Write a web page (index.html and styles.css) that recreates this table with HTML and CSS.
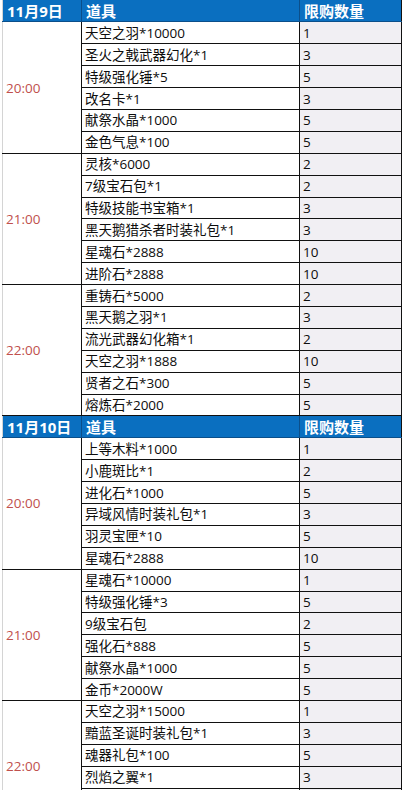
FILE: index.html
```html
<!DOCTYPE html>
<html lang="zh-CN">
<head>
<meta charset="utf-8">
<link rel="stylesheet" href="styles.css">
</head>
<body>
<div class="sheet">
<table class="grid">
<colgroup><col class="c-time"><col class="c-item"><col class="c-qty"></colgroup>
<tbody>
<tr class="head"><td class="h-date">11月9日</td><td class="h-item">道具</td><td class="h-qty">限购数量</td></tr>
<tr><td class="time" rowspan="6">20:00</td><td class="item">天空之羽*10000</td><td class="qty">1</td></tr>
<tr><td class="item">圣火之戟武器幻化*1</td><td class="qty">3</td></tr>
<tr><td class="item">特级强化锤*5</td><td class="qty">5</td></tr>
<tr><td class="item">改名卡*1</td><td class="qty">3</td></tr>
<tr><td class="item">献祭水晶*1000</td><td class="qty">5</td></tr>
<tr><td class="item">金色气息*100</td><td class="qty">5</td></tr>
<tr><td class="time" rowspan="6">21:00</td><td class="item">灵核*6000</td><td class="qty">2</td></tr>
<tr><td class="item">7级宝石包*1</td><td class="qty">2</td></tr>
<tr><td class="item">特级技能书宝箱*1</td><td class="qty">3</td></tr>
<tr><td class="item">黑天鹅猎杀者时装礼包*1</td><td class="qty">3</td></tr>
<tr><td class="item">星魂石*2888</td><td class="qty">10</td></tr>
<tr><td class="item">进阶石*2888</td><td class="qty">10</td></tr>
<tr><td class="time" rowspan="6">22:00</td><td class="item">重铸石*5000</td><td class="qty">2</td></tr>
<tr><td class="item">黑天鹅之羽*1</td><td class="qty">3</td></tr>
<tr><td class="item">流光武器幻化箱*1</td><td class="qty">2</td></tr>
<tr><td class="item">天空之羽*1888</td><td class="qty">10</td></tr>
<tr><td class="item">贤者之石*300</td><td class="qty">5</td></tr>
<tr><td class="item">熔炼石*2000</td><td class="qty">5</td></tr>
<tr class="head"><td class="h-date">11月10日</td><td class="h-item">道具</td><td class="h-qty">限购数量</td></tr>
<tr><td class="time" rowspan="6">20:00</td><td class="item">上等木料*1000</td><td class="qty">1</td></tr>
<tr><td class="item">小鹿斑比*1</td><td class="qty">2</td></tr>
<tr><td class="item">进化石*1000</td><td class="qty">5</td></tr>
<tr><td class="item">异域风情时装礼包*1</td><td class="qty">3</td></tr>
<tr><td class="item">羽灵宝匣*10</td><td class="qty">5</td></tr>
<tr><td class="item">星魂石*2888</td><td class="qty">10</td></tr>
<tr><td class="time" rowspan="6">21:00</td><td class="item">星魂石*10000</td><td class="qty">1</td></tr>
<tr><td class="item">特级强化锤*3</td><td class="qty">5</td></tr>
<tr><td class="item">9级宝石包</td><td class="qty">2</td></tr>
<tr><td class="item">强化石*888</td><td class="qty">5</td></tr>
<tr><td class="item">献祭水晶*1000</td><td class="qty">5</td></tr>
<tr><td class="item">金币*2000W</td><td class="qty">5</td></tr>
<tr><td class="time" rowspan="6">22:00</td><td class="item">天空之羽*15000</td><td class="qty">1</td></tr>
<tr><td class="item">黯蓝圣诞时装礼包*1</td><td class="qty">3</td></tr>
<tr><td class="item">魂器礼包*100</td><td class="qty">5</td></tr>
<tr><td class="item">烈焰之翼*1</td><td class="qty">3</td></tr>
<tr><td class="item"></td><td class="qty"></td></tr>
<tr><td class="item"></td><td class="qty"></td></tr>
</tbody>
</table>
</div>
</body>
</html>
```

FILE: styles.css
```css
html, body {
  margin: 0;
  padding: 0;
  background: #ffffff;
}
.sheet {
  width: 403px;
  height: 790px;
  overflow: hidden;
  padding-left: 2px;
  box-sizing: border-box;
  font-family: "Open Sans", "Noto Sans CJK SC", sans-serif;
}
.grid {
  border-collapse: collapse;
  table-layout: fixed;
  width: 399px;
}
.c-time { width: 79px; }
.c-item { width: 218px; }
.c-qty { width: 102px; }
.grid td {
  height: 21.9px;
  padding: 0 0 0 3px;
  box-sizing: border-box;
  border: 1px solid #111111;
  font-size: 13.5px;
  line-height: 18px;
  color: #0d0d0d;
  white-space: nowrap;
  overflow: hidden;
  vertical-align: middle;
}
.grid td.time {
  border-left: 1px solid #d4d4d4;
  color: #c0504d;
  font-size: 13.5px;
  padding-left: 3px;
  background: #ffffff;
}
.grid td.qty {
  background: #f1eff3;
}
.grid .head td {
  background: #0a6fc0;
  color: #ffffff;
  font-weight: bold;
  font-size: 15px;
  border-color: #0b4f8a;
  border-top: 0;
  padding-left: 4px;
}
.grid .head td.h-date {
  border-left: 1px solid #d4d4d4;
}
.grid .head td.h-qty {
  border-left-color: #6fa6d6;
  border-right-color: #111111;
}
```
